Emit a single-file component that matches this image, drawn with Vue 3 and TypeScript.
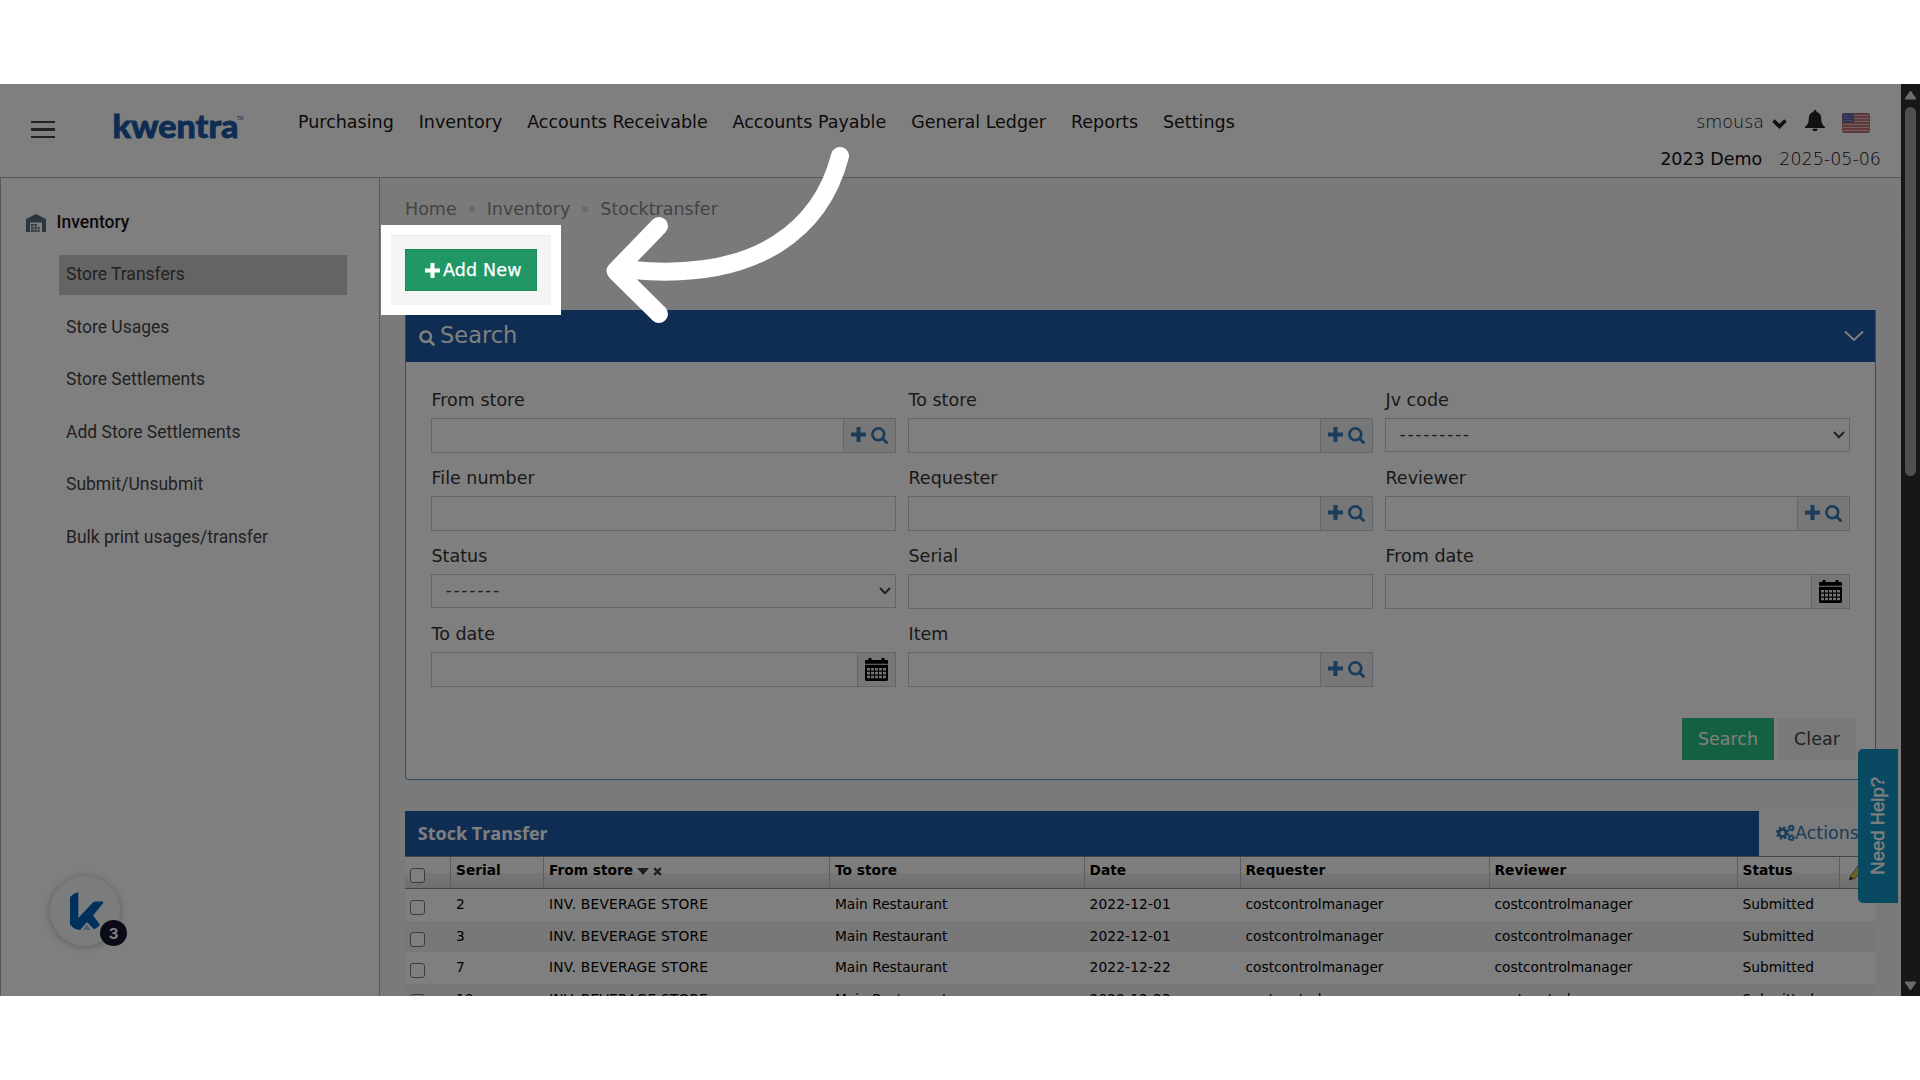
<script setup lang="ts">
type FieldKind = 'text' | 'lookup' | 'select' | 'date'

interface Field {
  label: string
  kind: FieldKind
  value?: string
}

interface Transfer {
  serial: number
  from: string
  to: string
  date: string
  requester: string
  reviewer: string
  status: string
}

const navItems = [
  'Purchasing',
  'Inventory',
  'Accounts Receivable',
  'Accounts Payable',
  'General Ledger',
  'Reports',
  'Settings',
]

const sideItems = [
  'Store Transfers',
  'Store Usages',
  'Store Settlements',
  'Add Store Settlements',
  'Submit/Unsubmit',
  'Bulk print usages/transfer',
]

const crumbs = ['Home', 'Inventory', 'Stocktransfer']

const fields: Field[] = [
  { label: 'From store', kind: 'lookup' },
  { label: 'To store', kind: 'lookup' },
  { label: 'Jv code', kind: 'select', value: '---------' },
  { label: 'File number', kind: 'text' },
  { label: 'Requester', kind: 'lookup' },
  { label: 'Reviewer', kind: 'lookup' },
  { label: 'Status', kind: 'select', value: '-------' },
  { label: 'Serial', kind: 'text' },
  { label: 'From date', kind: 'date' },
  { label: 'To date', kind: 'date' },
  { label: 'Item', kind: 'lookup' },
]

const makeTransfer = (serial: number, date: string): Transfer => ({
  serial,
  from: 'INV. BEVERAGE STORE',
  to: 'Main Restaurant',
  date,
  requester: 'costcontrolmanager',
  reviewer: 'costcontrolmanager',
  status: 'Submitted',
})

const transfers: Transfer[] = [
  makeTransfer(2, '2022-12-01'),
  makeTransfer(3, '2022-12-01'),
  makeTransfer(7, '2022-12-22'),
  makeTransfer(10, '2022-12-23'),
]
</script>

<template>
  <div class="frame">
    <div class="screen">
      <div class="app">
        <header class="topbar">
          <div class="burger"><i></i><i class="mid"></i><i></i></div>
          <svg class="logo" width="130" height="34" viewBox="0 0 130 34">
            <text x="0.500" y="26" textLength="126" lengthAdjust="spacingAndGlyphs" class="logo-text">kwentra</text>
            <text x="124.500" y="8" class="logo-tm" textLength="7">TM</text>
          </svg>
          <nav class="nav">
            <a v-for="item in navItems" :key="item">{{ item }}</a>
          </nav>
          <div class="account">
            <div class="account-row">
              <span class="thin user">smousa</span>
              <svg class="caret" width="15" height="10" viewBox="0 0 15 10"><path d="M1.500 1.500 7.500 7.500 13.500 1.500" fill="none" stroke="#222" stroke-width="3.600" /></svg>
              <svg class="bell" width="20" height="22" viewBox="0 0 20 22">
                <path fill="#222" d="M10 0c1 0 1.600.7 1.600 1.500v.6c3 .7 4.600 3 4.600 6 0 5 1.500 7 3.800 9v1H0v-1c2.300-2 3.800-4 3.800-9 0-3 1.600-5.300 4.600-6v-.6C8.400.7 9 0 10 0zM7.300 18.800h5.400a2.700 2.400 0 0 1-5.400 0z" />
              </svg>
              <svg class="flag" width="28" height="20" viewBox="0 0 28 20">
                <clipPath id="flagClip"><rect width="28" height="20" rx="2.500" /></clipPath>
                <g clip-path="url(#flagClip)">
                  <rect width="28" height="20" fill="#d9c8ca" />
                  <path d="M0 1h28M0 4h28M0 7h28M0 10h28M0 13h28M0 16h28M0 19h28" stroke="#c0545c" stroke-width="1.500" />
                  <rect width="12" height="9.500" fill="#5a62a8" />
                  <path d="M1.500 2.500h9M1.500 5h9M1.500 7.500h9" stroke="#a9aed6" stroke-dasharray="1 1" />
                </g>
                <rect x=".5" y=".5" width="27" height="19" rx="2.500" fill="none" stroke="#a8686e" stroke-opacity=".6" />
              </svg>
            </div>
            <div class="account-row second">
              <span>2023 Demo</span>
              <span class="thin">2025-05-06</span>
            </div>
          </div>
        </header>

        <div class="body">
          <aside class="side">
            <div class="side-head">
              <svg width="20" height="18" viewBox="0 0 20 18">
                <path fill="#566b7a" d="M0 18V5L10 0l10 5v13h-4V8.500H4V18z" />
                <path fill="#5f6d78" d="M5 10h2.500v2H5zM8.300 10h2.500v2H8.300zM5 12.700h2.500v2H5zM8.300 12.700h2.500v2H8.300zM11.600 12.700h2v2h-2zM5 15.400h2.500V18H5zM8.300 15.400h2.500V18H8.300zM11.600 15.400h2V18h-2z" />
              </svg>
              <span>Inventory</span>
            </div>
            <ul>
              <li v-for="(item, i) in sideItems" :key="item" :class="{ active: i === 0 }">{{ item }}</li>
            </ul>
          </aside>

          <main class="main">
            <div class="crumbs">
              <template v-for="(c, i) in crumbs" :key="c">
                <i v-if="i > 0"></i><span>{{ c }}</span>
              </template>
            </div>

            <button class="add">
              <svg width="15" height="15" viewBox="0 0 15 15"><path fill="#fff" d="M5.500 0h4v5.500H15v4H9.500V15h-4V9.500H0v-4h5.500z" /></svg>
              <span>Add New</span>
            </button>

            <section class="panel">
              <div class="panel-head">
                <svg width="16" height="16" viewBox="0 0 16 16"><circle cx="6.700" cy="6.700" r="5.200" fill="none" stroke="#fff" stroke-width="2.600" /><path d="M10.500 10.500 14.500 14.500" stroke="#fff" stroke-width="2.800" stroke-linecap="round" /></svg>
                <span>Search</span>
                <svg class="fold" width="20" height="12" viewBox="0 0 20 12"><path d="M1 1.500 10 10 19 1.500" fill="none" stroke="#fff" stroke-width="1.900" /></svg>
              </div>
              <div class="fields">
                <div v-for="f in fields" :key="f.label" class="field">
                  <label>{{ f.label }}</label>
                  <div class="control" :class="f.kind">
                    <div class="value">{{ f.value }}</div>
                    <svg v-if="f.kind === 'select'" class="arrow" width="12" height="8" viewBox="0 0 12 8"><path d="M1 1 6 6.300 11 1" fill="none" stroke="#444" stroke-width="2" /></svg>
                    <div v-if="f.kind === 'lookup'" class="addon">
                      <svg width="15" height="15" viewBox="0 0 15 15"><path fill="#337ab7" d="M5.500 0h4v5.500H15v4H9.500V15h-4V9.500H0v-4h5.500z" /></svg>
                      <svg width="17" height="17" viewBox="0 0 17 17"><circle cx="7.300" cy="7.300" r="5.900" fill="none" stroke="#337ab7" stroke-width="2.700" /><path d="M11.500 11.500 15.500 15.500" stroke="#337ab7" stroke-width="2.900" stroke-linecap="round" /></svg>
                    </div>
                    <div v-if="f.kind === 'date'" class="addon cal">
                      <svg width="23" height="23" viewBox="0 0 23 23">
                        <path d="M1 2h2.500V0h3v2h10V0h3v2H22a1 1 0 0 1 1 1v2.700H0V3a1 1 0 0 1 1-1zM0 6.800h23v14.700a1.500 1.500 0 0 1-1.500 1.500h-20A1.500 1.500 0 0 1 0 21.500z" />
                        <path stroke="#e4e4e4" stroke-width="2.600" stroke-dasharray="3 1" d="M2 11.200h19M2 15.100h19M2 19h19" />
                      </svg>
                    </div>
                  </div>
                </div>
              </div>
              <div class="actions">
                <button class="go">Search</button>
                <button class="clear">Clear</button>
              </div>
            </section>

            <section class="grid">
              <div class="grid-bar">
                <h3>Stock Transfer</h3>
                <div class="grid-actions">
                  <svg width="19" height="18" viewBox="0 0 19 18" fill="none" stroke="#337ab7">
                    <circle cx="6.500" cy="9" r="3.600" stroke-width="2.800" />
                    <circle cx="6.500" cy="9" r="5.500" stroke-width="2.200" stroke-dasharray="2.300 2.020" />
                    <circle cx="15.300" cy="4" r="1.900" stroke-width="1.600" />
                    <circle cx="15.300" cy="4" r="3" stroke-width="1.300" stroke-dasharray="1.300 1.060" />
                    <circle cx="15.300" cy="13.800" r="1.900" stroke-width="1.600" />
                    <circle cx="15.300" cy="13.800" r="3" stroke-width="1.300" stroke-dasharray="1.300 1.060" />
                  </svg>
                  <span>Actions</span>
                </div>
              </div>
              <div class="row head">
                <div class="cell check"><i class="box"></i></div>
                <div class="cell">Serial</div>
                <div class="cell sorted">
                  <span>From store</span>
                  <svg width="12" height="7" viewBox="0 0 12 7"><path d="M0 0h12L6 7z" fill="#3c3c3c" /></svg>
                  <svg width="9" height="9" viewBox="0 0 9 9"><path d="M1.200 1.200 7.800 7.800M7.800 1.200 1.200 7.800" stroke="#444" stroke-width="2.500" /></svg>
                </div>
                <div class="cell">To store</div>
                <div class="cell">Date</div>
                <div class="cell">Requester</div>
                <div class="cell">Reviewer</div>
                <div class="cell">Status</div>
                <div class="cell edit">
                  <svg width="18" height="18" viewBox="0 0 18 18"><path d="M1 14 10 1.500 14.500 5 5.500 16z" fill="#e5c34c" stroke="#8a7020" /><path d="M0 17.500 1 13.500 4.500 16z" fill="#333" /></svg>
                </div>
              </div>
              <div v-for="t in transfers" :key="t.serial" class="row item">
                <div class="cell check"><i class="box"></i></div>
                <div class="cell">{{ t.serial }}</div>
                <div class="cell store">{{ t.from }}</div>
                <div class="cell">{{ t.to }}</div>
                <div class="cell date">{{ t.date }}</div>
                <div class="cell">{{ t.requester }}</div>
                <div class="cell">{{ t.reviewer }}</div>
                <div class="cell">{{ t.status }}</div>
                <div class="cell"></div>
              </div>
            </section>
          </main>
        </div>
      </div>

      <div class="scrollbar">
        <svg width="13" height="10" viewBox="0 0 13 10"><path d="M6.500 1 12 9H1z" fill="#d8d8d8" stroke="#d8d8d8" stroke-linejoin="round" /></svg>
        <div class="thumb"></div>
        <svg class="down" width="13" height="10" viewBox="0 0 13 10"><path d="M6.500 9 12 1H1z" fill="#d8d8d8" stroke="#d8d8d8" stroke-linejoin="round" /></svg>
      </div>

      <div class="help"><span>Need Help?</span></div>

      <div class="launcher">
        <svg width="34" height="39" viewBox="0 0 34 39">
          <path fill="#0062b8" d="M0 5Q3 1.500 8.300 0V26L22 11.500Q23.500 9.500 26 9.500H32.500Q34 9.500 33 11.200L23 23.500 30 32.500Q28 36 24 37.300L17 30 10 38Q4 37.500 0 32.500z" />
          <path fill="#8ec4ea" d="M17 32.500 20.500 38H13z" />
        </svg>
        <b>3</b>
      </div>

      <div class="spotlight"></div>
      <svg class="pointer" width="260" height="190" viewBox="600 140 260 190">
        <path d="M840 156C822 225 762 282 632 270" />
        <path d="M659 226 615.500 271 659 314" />
      </svg>
    </div>
  </div>
</template>

<style>
body {
  margin: 0;
  background: #fff;
}
</style>

<style scoped>
.frame {
  box-sizing: border-box;
  width: 1920px;
  height: 1080px;
  padding-top: 84px;
  overflow: hidden;
  background: #fff;
  font-family: "DejaVu Sans", sans-serif;
  font-size: 17.5px;
  color: #333;
}
.screen {
  position: relative;
  display: flex;
  width: 1920px;
  height: 912px;
  overflow: hidden;
}
svg { display: block; flex: none; }
button { border: 0; font: inherit; }
.app {
  display: flex;
  flex-direction: column;
  width: 1901px;
  height: 912px;
  overflow: hidden;
}

/* Top bar */
.topbar {
  display: flex;
  flex: none;
  box-sizing: border-box;
  height: 94px;
  padding-left: 31px;
  background: #fff;
  border-bottom: 1px solid #b0b0b0;
}
.burger {
  display: flex;
  flex-direction: column;
  justify-content: space-between;
  width: 24px;
  height: 17px;
  margin-top: 37px;
}
.burger i { height: 2px; background: #444; }
.burger .mid { height: 3px; }
.logo { margin: 28px 0 0 57px; overflow: visible; }
.logo-text { font: 900 32px Lato, sans-serif; fill: #1e5aa6; stroke: #1e5aa6; stroke-width: .8px; }
.logo-tm { font: 5px "Liberation Sans", sans-serif; fill: #1e5aa6; }
.nav {
  display: flex;
  gap: 24.900px;
  margin: 26px 0 0 56px;
  line-height: 24px;
  color: #1b1416;
  white-space: nowrap;
}
.account { margin: 26px 20px 0 auto; line-height: 24px; color: #111; }
.account-row { display: flex; height: 24px; }
.account-row.second { gap: 17px; margin-top: 13px; }
.account-row .user { margin-left: 36px; }
.thin {
  font-family: "DejaVu Sans Light", "DejaVu Sans", sans-serif;
  font-weight: 200;
}
.caret { margin: 9px 0 0 8px; }
.bell { margin-left: 18px; }
.flag { margin: 3px 0 0 17px; }

/* Sidebar */
.body { display: flex; flex: 1; min-height: 0; }
.side {
  box-sizing: border-box;
  flex: none;
  width: 380px;
  padding-left: 25px;
  border: solid #b0b0b0;
  border-width: 0 1px;
  background: #fff;
  font-family: Roboto, sans-serif;
}
.side-head {
  display: flex;
  align-items: center;
  gap: 10.500px;
  margin-top: 32px;
  height: 26px;
  font-weight: 500;
  color: #1b1416;
}
.side-head span { line-height: 24px; margin-bottom: 2px; }
.side ul { margin: 19px 0 0 33px; padding: 0; list-style: none; }
.side li {
  box-sizing: border-box;
  width: 288px;
  height: 40px;
  margin-bottom: 12.500px;
  padding-left: 7px;
  line-height: 38px;
  color: #444;
}
.side li.active { background: #c8c8c8; }

/* Main column */
.main { flex: 1; min-width: 0; background: #f4f4f4; }
.crumbs {
  display: flex;
  align-items: center;
  height: 57px;
  padding-left: 25px;
  border-bottom: 1px solid #e7ecf1;
  line-height: 62px;
  color: #888;
}
.crumbs span { height: 57px; }
.crumbs i {
  width: 6px;
  height: 6px;
  margin: 4px 12px 0;
  border-radius: 50%;
  background: #d0d0d0;
}
.add {
  display: flex;
  align-items: center;
  gap: 3px;
  box-sizing: border-box;
  width: 132px;
  height: 42px;
  margin: 13px 0 0 25px;
  padding: 0 0 0 19px;
  border: 1px solid #1a8a58;
  background: #209765;
  color: #fff;
  letter-spacing: .15px;
  -webkit-text-stroke: .25px #fff;
}
.panel {
  box-sizing: border-box;
  width: 1471px;
  height: 470px;
  margin: 19px 0 0 25px;
  border: 1px solid #5a9ccc;
  border-top: 0;
  border-radius: 0 0 2px 4px;
  background: #fff;
}
.panel-head {
  display: flex;
  align-items: center;
  height: 52px;
  padding: 0 11px 0 13px;
  background: #1e5aa6;
  color: #fff;
  font-size: 22.5px;
}
.panel-head svg:first-child { margin: 3px 5px 0 0; }
.panel-head span { line-height: 48px; margin-bottom: 3px; }
.fold { margin-left: auto; }
.fields {
  display: grid;
  grid-template-columns: repeat(3, 465px);
  column-gap: 12px;
  grid-auto-rows: 78.100px;
  height: 312.800px;
  box-sizing: content-box;
  padding: 24px 0 0 25px;
}
.field label { display: block; height: 32.200px; line-height: 28px; padding-left: .5px; }
.control {
  display: flex;
  box-sizing: border-box;
  height: 34.500px;
  border: 1px solid #c2cad8;
}
.control.select { height: 33.700px; }
.value { flex: 1; padding-left: 13.500px; line-height: 30px; letter-spacing: 1.600px; color: #444; }
.arrow { margin: 12px 4px 0 0; }
.addon {
  display: flex;
  gap: 5px;
  box-sizing: border-box;
  width: 52px;
  padding: 7.500px 0 0 7px;
  border-left: 1px solid #ccc;
  background: #eee;
}
.addon.cal { width: 38.500px; padding: 4.500px 0 0 7px; }
.actions {
  display: flex;
  justify-content: flex-end;
  gap: 4px;
  margin-top: 19px;
  padding-right: 19px;
}
.actions button { height: 42px; padding: 0; }
.go { width: 92px; background: #26c281; color: #fff; }
.clear { width: 78px; background: #f2f2f2; color: #444; }

/* Results */
.grid { width: 1471px; margin: 31px 0 0 25px; }
.grid-bar { display: flex; height: 45px; background: #1e5aa6; }
.grid-bar h3 {
  flex: 1;
  margin: 0;
  padding-left: 12.800px;
  font: 700 18px/45px "Open Sans", sans-serif;
  color: #fff;
}
.grid-actions {
  display: flex;
  box-sizing: border-box;
  width: 117px;
  padding-left: 17px;
  background: #f6f6f6;
  color: #337ab7;
  line-height: 44px;
}
.grid-actions svg { margin-top: 13px; }
.row {
  display: grid;
  grid-template-columns: 46px 93px 286px 254.500px 156px 249px 248px 102px 1fr;
  box-sizing: border-box;
  height: 31.250px;
  line-height: 30px;
  font-size: 13.750px;
  color: #000;
  background: #fff;
}
.row.item:nth-child(even) { background: #f0f0f0; }
.row.item:nth-child(3) { height: 32px; }
.row.head {
  height: 33px;
  border: solid #8c8c8c;
  border-width: 1px 0;
  background: linear-gradient(#fdfdfd 0 50%, #efefef 50%, #dedede);
  font-weight: 700;
  line-height: 26px;
}
.cell { padding-left: 5px; white-space: nowrap; }
.store { letter-spacing: .220px; }
.head .cell { border-right: 1px solid #bdbdbd; }
.head .cell:last-child { border-right: 0; }
.date { letter-spacing: .150px; }
.check.check { padding: 10.500px 0 0 5px; }
.box {
  display: block;
  box-sizing: border-box;
  width: 15px;
  height: 15px;
  border: 1.500px solid #767676;
  border-radius: 3px;
  background: #fff;
}
.sorted { display: flex; gap: 4px; }
.sorted svg { margin-top: 11px; }
.sorted svg:last-child { margin-top: 10px; }
.cell.edit { padding: 6px 0 0 9px; }

/* Scrollbar */
.scrollbar {
  display: flex;
  flex-direction: column;
  align-items: center;
  flex: none;
  width: 19px;
  padding: 6px 0 5px;
  box-sizing: border-box;
  background: #2e2e2e;
}
.thumb { width: 11px; height: 369px; margin-top: 7px; border-radius: 6px; background: #9e9e9e; }
.scrollbar .down { margin-top: auto; }

/* Floating pieces */
.help {
  position: absolute;
  left: 1858px;
  top: 665px;
  display: flex;
  align-items: center;
  justify-content: center;
  width: 40px;
  height: 154px;
  border-radius: 5px 0 0 5px;
  background: #1593c4;
  color: #fff;
  font: 18.500px "Liberation Sans", sans-serif;
  -webkit-text-stroke: .4px #fff;
}
.help span { writing-mode: vertical-rl; transform: rotate(180deg); white-space: nowrap; margin-right: 1px; }
.launcher {
  position: absolute;
  left: 50px;
  top: 792px;
  display: flex;
  align-items: center;
  justify-content: center;
  width: 70px;
  height: 70px;
  border-radius: 50%;
  background: #f6fbfa;
  box-shadow: 0 1px 8px rgba(0, 0, 0, .28);
}
.launcher svg { margin-left: 3px; }
.launcher b {
  position: absolute;
  left: 50px;
  top: 44px;
  width: 27px;
  height: 26px;
  border-radius: 50%;
  background: #14172c;
  color: #fff;
  font: 700 15px/27px Inter, sans-serif;
  text-align: center;
}
.spotlight {
  position: absolute;
  left: 381px;
  top: 141px;
  box-sizing: border-box;
  width: 179.500px;
  height: 90px;
  border: 10px solid #fff;
  box-shadow: 0 0 0 2000px rgba(0, 0, 0, .5);
}
.pointer { position: absolute; left: 600px; top: 56px; }
.pointer path {
  fill: none;
  stroke: #fff;
  stroke-width: 18px;
  stroke-linecap: round;
  stroke-linejoin: round;
}
</style>
